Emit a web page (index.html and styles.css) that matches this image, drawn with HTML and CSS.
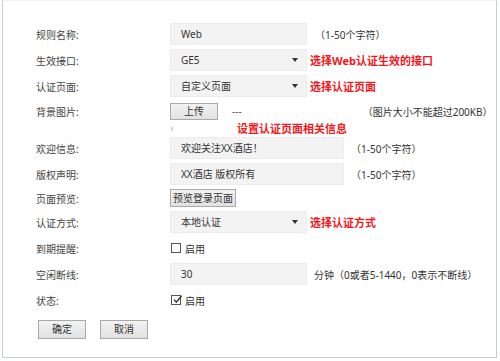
FILE: index.html
```html
<!DOCTYPE html>
<html>
    <head>
        <title>Web认证规则</title>
        <link rel="stylesheet" href="styles.css">
    </head>
    <body>
        <div class="panel">
            <div class="form">
                <div class="row">
                    <span class="label">规则名称:</span>
                    <div class="field short">Web</div>
                    <span class="hint after-short">（1-50个字符）</span>
                </div>
                <div class="row">
                    <span class="label">生效接口:</span>
                    <div class="field short select">GE5<span class="arrow"></span></div>
                    <span class="tip">选择Web认证生效的接口</span>
                </div>
                <div class="row">
                    <span class="label">认证页面:</span>
                    <div class="field short select">自定义页面<span class="arrow"></span></div>
                    <span class="tip">选择认证页面</span>
                </div>
                <div class="row row-upload">
                    <span class="label">背景图片:</span>
                    <button class="btn upload">上传</button>
                    <span class="dash">---</span>
                    <span class="hint size-hint">（图片大小不能超过200KB）</span>
                </div>
                <div class="row row-note">
                    <span class="thumb"></span>
                    <span class="tip note">设置认证页面相关信息</span>
                </div>
                <div class="row">
                    <span class="label">欢迎信息:</span>
                    <div class="field wide">欢迎关注XX酒店！</div>
                    <span class="hint after-wide">（1-50个字符）</span>
                </div>
                <div class="row">
                    <span class="label">版权声明:</span>
                    <div class="field wide">XX酒店 版权所有</div>
                    <span class="hint after-wide">（1-50个字符）</span>
                </div>
                <div class="row row-preview">
                    <span class="label">页面预览:</span>
                    <button class="btn preview">预览登录页面</button>
                </div>
                <div class="row">
                    <span class="label">认证方式:</span>
                    <div class="field short select">本地认证<span class="arrow"></span></div>
                    <span class="tip">选择认证方式</span>
                </div>
                <div class="row">
                    <span class="label">到期提醒:</span>
                    <span class="check"></span>
                    <span class="check-text">启用</span>
                </div>
                <div class="row">
                    <span class="label">空闲断线:</span>
                    <div class="field short">30</div>
                    <span class="hint after-idle">分钟（0或者5-1440，0表示不断线）</span>
                </div>
                <div class="row">
                    <span class="label">状态:</span>
                    <span class="check checked">
                        <svg width="10" height="10" viewBox="0 0 10 10"><path d="M2 4.6 L4.3 7.2 L9.6 0.8" fill="none" stroke="#333" stroke-width="1.4"/></svg>
                    </span>
                    <span class="check-text">启用</span>
                </div>
            </div>
            <div class="actions">
                <button class="btn action">确定</button>
                <button class="btn action">取消</button>
            </div>
        </div>
    </body>
</html>
```

FILE: styles.css
```css
body {
    margin: 0;
    font-family: "Noto Sans", "Noto Sans CJK SC", sans-serif;
    font-size: 10px;
    color: #333;
    background: #fff;
}

.panel {
    margin: 0 3px 0 2px;
    height: 358px;
    box-sizing: border-box;
    border: 1px solid #c3ccd9;
    border-top-color: #f0f0f0;
    padding: 22px 0 0 33px;
}

.form {
    display: flex;
    flex-direction: column;
    gap: 4px;
}

.row {
    display: flex;
    align-items: center;
    height: 22px;
}

.row-upload { height: 20px; }
.row-note { height: 8px; }
.row-preview { height: 18px; }

.label {
    width: 134px;
    flex: none;
    color: #444;
}

.field {
    height: 22px;
    box-sizing: border-box;
    padding: 0 8px 0 10px;
    line-height: 20px;
    background: #f3f3f3;
    border: 1px solid #ececec;
    color: #333;
    font-size: 10px;
}

.field.short { width: 137px; }
.field.wide { width: 174px; }

.select {
    display: flex;
    align-items: center;
    justify-content: space-between;
}

.arrow {
    width: 0;
    height: 0;
    border-left: 3.5px solid transparent;
    border-right: 3.5px solid transparent;
    border-top: 4px solid #333;
}

.tip {
    margin-left: 3px;
    color: #f5161b;
    font-size: 11px;
    font-weight: bold;
}

.hint { color: #333; }
.after-short { margin-left: 8px; }
.after-wide { margin-left: 7px; }
.after-idle { margin-left: 7px; }

.btn {
    box-sizing: border-box;
    height: 17px;
    padding: 0;
    border: 1px solid #a9a9a9;
    background: linear-gradient(#f2f2f2, #e2e2e2);
    font-family: inherit;
    font-size: 10px;
    color: #333;
    line-height: 15px;
}

.upload { width: 48px; }
.preview { width: 66px; height: 18px; }

.dash {
    margin-left: 14px;
    color: #555;
}

.size-hint { margin-left: 121px; }

.thumb {
    width: 2px;
    height: 4px;
    margin-left: 135px;
    background: #d6d6d6;
}

.note {
    margin-left: 64px;
    line-height: 8px;
}

.check {
    width: 10px;
    height: 10px;
    box-sizing: border-box;
    margin-left: 1px;
    border: 1px solid #555;
    background: #fff;
    position: relative;
}

.check svg {
    position: absolute;
    left: 0;
    top: -1px;
}

.check-text { margin-left: 4px; }

.actions {
    display: flex;
    gap: 14px;
    margin-top: 9px;
    margin-left: 2px;
}

.action {
    width: 48px;
    height: 19px;
    line-height: 17px;
}
```
